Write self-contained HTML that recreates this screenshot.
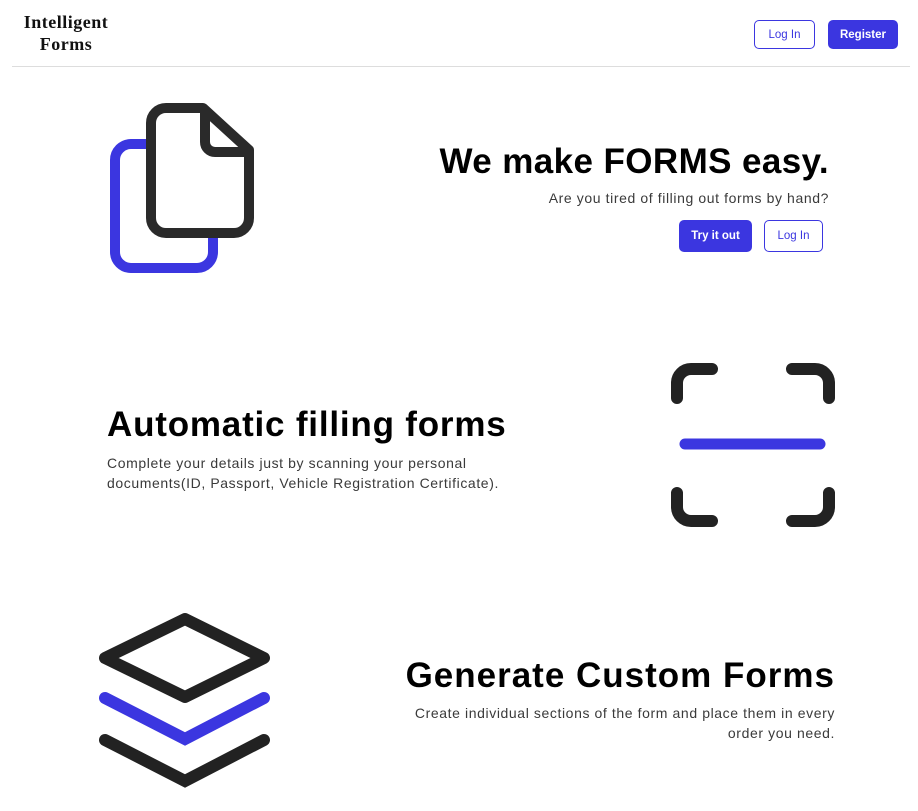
<!DOCTYPE html>
<html><head><meta charset="utf-8"><style>
*{margin:0;padding:0;box-sizing:border-box}
body{width:918px;height:811px;background:#fff;font-family:"Liberation Sans",sans-serif;position:relative;overflow:hidden;color:#000}
.a{position:absolute}
.logo{left:8px;top:11px;width:116px;text-align:center;font-family:"Liberation Serif",serif;font-weight:bold;font-size:18px;line-height:22px;color:#111;letter-spacing:0.5px}
.hr{left:12px;top:66px;width:898px;height:1px;background:#ddd}
.btn{position:absolute;border:1px solid #3b36e0;border-radius:5px;font-size:11.5px;display:flex;align-items:center;justify-content:center;color:#3b36e0;background:#fff}
.btn.f{background:#3b36e0;color:#fff;font-weight:bold}
h1{position:absolute;font-weight:bold;white-space:nowrap}
p{position:absolute;font-size:14px;color:#3a3a3a;line-height:20px;letter-spacing:0.6px;white-space:nowrap}
</style></head><body>
<div class="a logo">Intelligent<br>Forms</div>
<div class="btn" style="left:754px;top:20px;width:61px;height:29px">Log In</div>
<div class="btn f" style="left:828px;top:20px;width:70px;height:29px">Register</div>
<div class="a hr"></div>

<svg class="a" style="left:0;top:0" width="918" height="811">
<rect x="115" y="144" width="98" height="124" rx="16" fill="none" stroke="#3b36e0" stroke-width="10"/>
<path d="M166 108 H203 L249 150 V218 a15 15 0 0 1 -15 15 H166 a15 15 0 0 1 -15 -15 V123 a15 15 0 0 1 15 -15 Z" fill="#fff" stroke="#2a2a2a" stroke-width="10" stroke-linejoin="round"/>
<path d="M205 108 V142 a10 10 0 0 0 10 10 H249" fill="none" stroke="#2a2a2a" stroke-width="10"/>
<g fill="none" stroke="#222" stroke-width="12" stroke-linecap="round">
<path d="M677 398 V383 a14 14 0 0 1 14 -14 H712"/>
<path d="M792 369 H815 a14 14 0 0 1 14 14 V398"/>
<path d="M677 493 V507 a14 14 0 0 0 14 14 H712"/>
<path d="M792 521 H815 a14 14 0 0 0 14 -14 V493"/>
<path d="M185 619 L264 658 L185 697 L105 658 Z" stroke-linejoin="round"/>
<path d="M105 740 L185 781 L264 740"/>
</g>
<path d="M685 444 H820" stroke="#3b36e0" stroke-width="11" stroke-linecap="round"/>
<path d="M105 698 L185 739 L264 698" fill="none" stroke="#3b36e0" stroke-width="12" stroke-linecap="round"/>
</svg>

<h1 style="right:89px;top:142px;font-size:35px;letter-spacing:0.4px">We make FORMS easy.</h1>
<p style="right:89px;top:188px;text-align:right">Are you tired of filling out forms by hand?</p>
<div class="btn f" style="left:679px;top:220px;width:73px;height:32px">Try it out</div>
<div class="btn" style="left:764px;top:220px;width:59px;height:32px">Log In</div>

<h1 style="left:107px;top:405px;font-size:35px;letter-spacing:0.8px">Automatic filling forms</h1>
<p style="left:107px;top:453px">Complete your details just by scanning your personal<br>documents(ID, Passport, Vehicle Registration Certificate).</p>

<h1 style="right:83px;top:656px;font-size:35px;letter-spacing:1px">Generate Custom Forms</h1>
<p style="right:83px;top:703px;text-align:right">Create individual sections of the form and place them in every<br>order you need.</p>
</body></html>
